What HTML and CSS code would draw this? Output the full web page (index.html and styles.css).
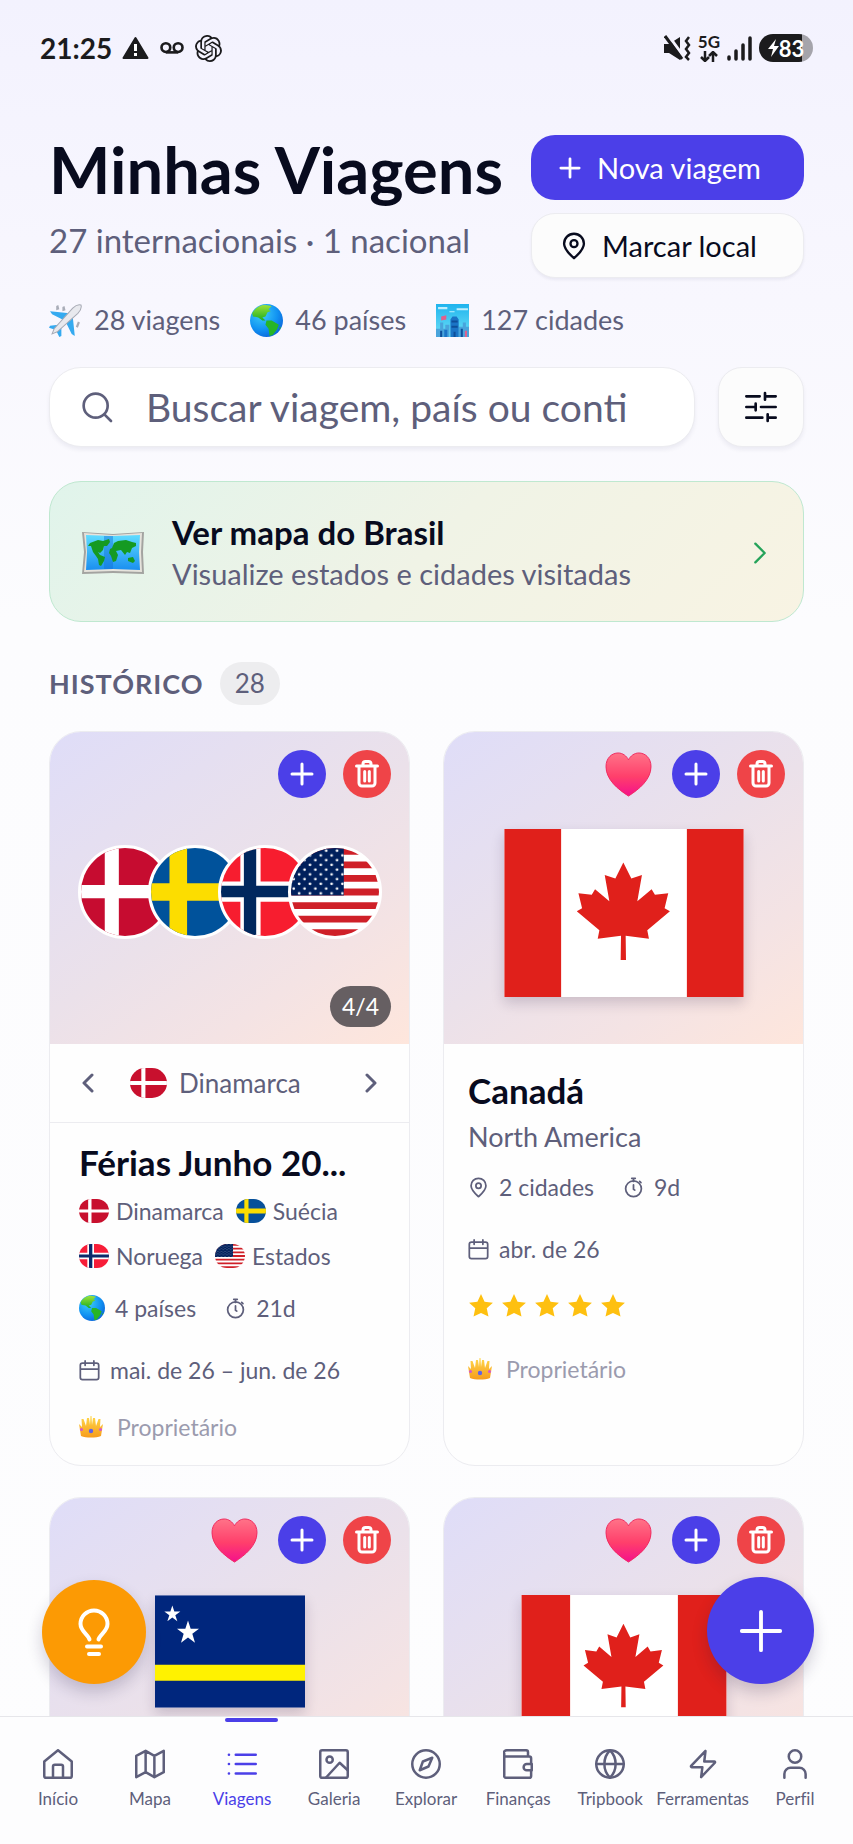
FILE: index.html
```html
<!DOCTYPE html>
<html lang="pt-BR">
<head>
  <meta charset="UTF-8">
  <meta name="viewport" content="width=device-width, initial-scale=1.0">
  <title>Minhas Viagens</title>
  <link rel="stylesheet" href="styles.css">
</head>
<body>

  <!-- Icon sprite -->
  <svg class="sprite" width="0" height="0" aria-hidden="true">
    <defs>
      <linearGradient id="g-heart" x1="0" y1="0" x2="0" y2="1">
        <stop offset="0" stop-color="#ff7388"/><stop offset=".55" stop-color="#ff3f6b"/><stop offset="1" stop-color="#f5108c"/>
      </linearGradient>
      <radialGradient id="g-sea" cx=".35" cy=".3" r=".8">
        <stop offset="0" stop-color="#3fd0f8"/><stop offset=".6" stop-color="#1192f2"/><stop offset="1" stop-color="#0a5fd8"/>
      </radialGradient>
      <linearGradient id="g-land" x1="0" y1="0" x2="0" y2="1">
        <stop offset="0" stop-color="#9be23a"/><stop offset="1" stop-color="#1fae1f"/>
      </linearGradient>
      <linearGradient id="g-map" x1="0" y1="0" x2="0" y2="1">
        <stop offset="0" stop-color="#5fdcff"/><stop offset="1" stop-color="#1a8ff0"/>
      </linearGradient>
      <linearGradient id="g-gold" x1="0" y1="0" x2="0" y2="1">
        <stop offset="0" stop-color="#ffd84a"/><stop offset="1" stop-color="#f79d1c"/>
      </linearGradient>
      <linearGradient id="g-sky" x1="0" y1="0" x2="0" y2="1">
        <stop offset="0" stop-color="#1fb4ee"/><stop offset="1" stop-color="#6fe0f6"/>
      </linearGradient>
      <pattern id="p-stars" width="16" height="14" patternUnits="userSpaceOnUse">
        <circle cx="4" cy="4" r="2" fill="#fff"/><circle cx="12" cy="11" r="2" fill="#fff"/>
      </pattern>
    </defs>

    <symbol id="plus" viewBox="0 0 24 24"><path d="M12 2v20M2 12h20"/></symbol>
    <symbol id="pin" viewBox="0 0 24 24"><path d="M20.500 10c0 5-5.500 9.800-8.500 12.500C9 19.800 3.500 15 3.500 10a8.500 8.500 0 0 1 17 0z"/><circle cx="12" cy="10" r="3"/></symbol>
    <symbol id="search" viewBox="0 0 24 24"><circle cx="11" cy="11" r="9"/><path d="m17.500 17.500 5 5"/></symbol>
    <symbol id="sliders" viewBox="0 0 24 24"><path d="M1 4h10M15 4h8M15 1.500v5M1 12h7M12 12h11M8 9.500v5M1 20h12M17 20h6M17 17.500v5"/></symbol>
    <symbol id="chev-right" viewBox="0 0 12 20"><path d="m2 2 8 8-8 8"/></symbol>
    <symbol id="chev-left" viewBox="0 0 12 20"><path d="m10 2-8 8 8 8"/></symbol>
    <symbol id="trash" viewBox="0 0 24 28"><path d="M1.500 6h21M4 6v17a3 3 0 0 0 3 3h10a3 3 0 0 0 3-3V6M8 6V4a2.500 2.500 0 0 1 2.500-2.500h3A2.500 2.500 0 0 1 16 4v2M9.700 11.500v9.500M14.300 11.500v9.500"/></symbol>
    <symbol id="timer" viewBox="0 0 24 24"><path d="M10 1.500h4M12 2v3M12 9v5l1.500 1M19 5l1.500 1.500"/><circle cx="12" cy="13.500" r="9"/></symbol>
    <symbol id="calendar" viewBox="0 0 24 24"><rect x="1.500" y="3.500" width="21" height="19" rx="2.500"/><path d="M7 1v5M17 1v5M2 10.500h20"/></symbol>
    <symbol id="star" viewBox="0 0 24 24"><path d="M12 1l3.300 7 7.700.9-5.700 5.200 1.600 7.700L12 18.500 5.100 21.800l1.600-7.700L1 8.900 8.700 8z"/></symbol>
    <symbol id="bulb" viewBox="0 0 32 48"><path d="M11.500 31.500c-1-5-9-8-9-15.500a13.500 13.500 0 0 1 27 0c0 7.500-8 10.500-9 15.500M9 38.500h14M11 46h10"/></symbol>

    <symbol id="home" viewBox="0 0 24 24"><path d="M1 10 12 1l11 9v11.500a1.500 1.500 0 0 1-1.500 1.500h-19A1.500 1.500 0 0 1 1 21.500z"/><path d="M8 23v-9a1.500 1.500 0 0 1 1.500-1.500h5A1.500 1.500 0 0 1 16 14v9"/></symbol>
    <symbol id="map" viewBox="0 0 24 24"><path d="M1 5.500 8.500 1.500l7 4 7.500-4v17l-7.500 4-7-4L1 22.500zM8.500 1.500v17M15.500 5.500v17"/></symbol>
    <symbol id="list" viewBox="0 0 24 24"><path d="M7 4.500h16M7 12h16M7 19.500h16M1.500 4.500h.1M1.500 12h.1M1.500 19.500h.1"/></symbol>
    <symbol id="image" viewBox="0 0 24 24"><rect x="1" y="1" width="22" height="22" rx="1.500"/><circle cx="8.500" cy="8.500" r="2.500"/><path d="m5.500 23 11-12 6.500 6"/></symbol>
    <symbol id="compass" viewBox="0 0 24 24"><circle cx="12" cy="12" r="11"/><path d="m17 7-3 7-7 3 2.500-7z"/></symbol>
    <symbol id="wallet" viewBox="0 0 24 24"><path d="M20 6V2.500A1.500 1.500 0 0 0 18.500 1H3a2 2 0 0 0 0 5h18a1.500 1.500 0 0 1 1.500 1.500V12M1 3.500V21A1.500 1.500 0 0 0 2.500 23H21a1.500 1.500 0 0 0 1.500-1.500V17"/><path d="M23 12h-4a2.500 2.500 0 0 0 0 5h4z"/></symbol>
    <symbol id="globe" viewBox="0 0 24 24"><circle cx="12" cy="12" r="11"/><path d="M1 12h22M12 1c3.500 3.500 4.500 7 4.500 11s-1 7.500-4.500 11c-3.500-3.500-4.500-7-4.500-11S8.500 4.500 12 1"/></symbol>
    <symbol id="zap" viewBox="0 0 24 24"><path d="M14 1.500 2.500 13.500a.6.600 0 0 0 .5 1h8.500L10.500 22.500 21.500 11a.6.600 0 0 0-.5-1h-8z"/></symbol>
    <symbol id="user" viewBox="0 0 24 24"><circle cx="12" cy="6" r="5"/><path d="M3.500 23v-3a5 5 0 0 1 5-5h7a5 5 0 0 1 5 5v3"/></symbol>

    <!-- Emoji-like pictures -->
    <symbol id="heart" viewBox="0 0 48 46"><path fill="url(#g-heart)" stroke="#f02a5e" d="M24 45C13 38 1 28 1 15 1 6 7 1 13.500 1 18 1 22 4 24 8c2-4 6-7 10.500-7C41 1 47 6 47 15c0 13-12 23-23 30z"/></symbol>
    <symbol id="earth" viewBox="0 0 32 32">
      <circle cx="16" cy="16" r="16" fill="url(#g-sea)"/>
      <path fill="url(#g-land)" d="M2 9C5 4 9 1 15 1l6 1-3 3 2 2-3 1-2 4-3 1 3 3-3 0-4-3-5-1z"/>
      <path fill="#27b527" d="M16 16l5 0 7 4-2 5-4 5-3 1-1-7-3-4zM28 23l2-1-1 3z"/>
    </symbol>
    <symbol id="plane" viewBox="0 0 32 32">
      <path fill="#35aaf0" d="M20 9 1 7l2 3 12 6zM23 12l2 19-3-2-6-12z"/>
      <path fill="#35aaf0" d="M9 20l-8 1-1 2 6 2zM12 23l0 8-2 1-3-6z"/>
      <path fill="#a9adb8" d="M7 2l2-1 1 4-3 1zM13 3l2-1 1 4-3 1zM28 17l2 1-2 5-2-1z"/>
      <path fill="#e8e9ee" stroke="#a8abb5" d="M31 1c-3-1-6 1-8 3L5 24l-2 5 5-2L28 9c2-2 4-5 3-8z"/>
    </symbol>
    <symbol id="city" viewBox="0 0 32 32">
      <path fill="url(#g-sky)" d="M0 0h32v32H0z"/>
      <path fill="#bdeefd" d="M2 3h9v2H2zM20 4h11v2H20zM13 7h5v1h-5z"/>
      <path fill="#49a4dc" d="M0 24h4v-6h3v6h2v-4h4v12H0zM22 22h4v-4h3v4h3v10H22z"/>
      <path fill="#1b74c6" d="M14 32V15l2-3h4l2 3v17zM8 25h3v7H8z"/>
      <path fill="#0e4f9a" d="M15 16h6v2h-6zM15 21h6v2h-6zM4 26h2v6H4zM24 24h2v8h-2zM17 27h2v5h-2z"/>
      <path fill="#e0608c" d="M5 12l5-1v4l-5 1zM28 26h2v6h-2z"/>
    </symbol>
    <symbol id="worldmap" viewBox="0 0 62 44">
      <path fill="#a3a3a0" d="M0 1l31 2L62 1l-1 20 1 22-31-1-31 1 2-22z"/>
      <path fill="#e6e3dc" d="M2 2l29 2 29-2-1 19 1 20-29-1-29 1 2-20z"/>
      <path fill="url(#g-map)" d="M4 4l27 1 27-1-1 17 1 18-27-1-27 1 1-18z"/>
      <path fill="#126fd6" opacity=".45" d="M22 5h9v33h-9z"/>
      <path fill="#159a22" d="M8 12l8-3 5 1 6-2 1 3-3 4-3 0-1 4-3 3-2-1 2 3 5 2-1 4-3 5-2-1-1-6-2-3-3-4-2-6-3 0zM30 17l2-5 4-2 8-1 6 2 4 1 0 3-4 2-2 5-3-1-2 3-4-5-5 1 2 4-2 6-3 1-2-6-2-3 1-4 4-2zM46 27l5-1 2 4-2 2-5-2z"/>
    </symbol>
    <symbol id="crown" viewBox="0 0 24 22">
      <path fill="url(#g-gold)" d="M2 20 0 8l3 3L2.500 3l2 0 2.500 7L8 2h2l1 7 .5-9h1l.5 9 1-7h2l1 8 2.500-7h2L21 11l3-3-2 12c-5 2-15 2-20 0z"/>
      <circle cx="12" cy="15" r="2.200" fill="#5f62e8"/><circle cx="2.500" cy="13.500" r="1.500" fill="#d657c9"/><circle cx="21.500" cy="13.500" r="1.500" fill="#d657c9"/>
    </symbol>

    <!-- Flags -->
    <symbol id="dk" viewBox="0 0 100 100" preserveAspectRatio="none"><path fill="#c60c30" d="M0 0h100v100H0z"/><path fill="#fff" d="M27 0h16v100H27z"/><path fill="#fff" d="M0 42h100v15H0z"/></symbol>
    <symbol id="se" viewBox="0 0 100 100" preserveAspectRatio="none"><path fill="#00529b" d="M0 0h100v100H0z"/><path fill="#fcdd00" d="M21 0h20v100H21z"/><path fill="#fcdd00" d="M0 40h100v20H0z"/></symbol>
    <symbol id="no" viewBox="0 0 100 100" preserveAspectRatio="none"><path fill="#f71d2f" d="M0 0h100v100H0z"/><path fill="#fff" d="M22 0h23v100H22z"/><path fill="#fff" d="M0 38h100v23H0z"/><path fill="#00285e" d="M26 0h14v100H26z"/><path fill="#00285e" d="M0 43h100v13H0z"/></symbol>
    <symbol id="us" viewBox="0 0 130 130" preserveAspectRatio="none"><path fill="#fff" d="M0 0h130v130H0z"/><path stroke="#cf2028" stroke-width="10" d="M0 5h130M0 25h130M0 45h130M0 65h130M0 85h130M0 105h130M0 125h130"/><path fill="#00205c" d="M0 0h78v70H0z"/><path fill="url(#p-stars)" d="M0 0h78v70H0z"/></symbol>
    <symbol id="dk-mini" viewBox="0 0 36 30" preserveAspectRatio="none"><path fill="#c8102e" d="M0 0h36v30H0z"/><path fill="#fff" d="M11 0h4v30h-4zM0 13h36v4H0z"/></symbol>
    <symbol id="se-mini" viewBox="0 0 36 30" preserveAspectRatio="none"><path fill="#07509a" d="M0 0h36v30H0z"/><path fill="#fcdd00" d="M10 0h5v30h-5zM0 12h36v6H0z"/></symbol>
    <symbol id="no-mini" viewBox="0 0 36 30" preserveAspectRatio="none"><path fill="#f71d38" d="M0 0h36v30H0z"/><path fill="#fff" d="M10 0h8v30h-8zM0 11h36v8H0z"/><path fill="#0a2a6b" d="M12 0h4v30h-4zM0 13h36v4H0z"/></symbol>
    <symbol id="ca" viewBox="0 0 720 505"><path fill="#fff" d="M0 0h720v505H0z"/><path fill="#e0201b" d="M0 0h171v505H0zM549 0h171v505H549z"/><path fill="#e0201b" d="M358 101l24 48 32-11-14 79 43-36 10 17 40-5-11 45 16 9-68 57 5 26-70-9 1 73h-16l1-73-70 9 5-26-68-57 16-9-11-45 40 5 10-17 43 36-14-79 32 11z"/></symbol>
    <symbol id="cw" viewBox="0 0 450 338"><path fill="#00267d" d="M0 0h450v338H0z"/><path fill="#fff200" d="M0 209h450v48H0z"/><path fill="#fff" d="M52 31l6 18h18L61 60l6 18-15-11-15 11 6-18-15-11h18zM99 76l8 25h25l-20 15 8 27-21-16-21 16 8-27-20-15h25z"/></symbol>
  </svg>

  <div class="app">
    <div class="status-bar">
      <div class="status-group">
        <span class="clock">21:25</span>
        <svg width="27" height="24" viewBox="0 0 27 24"><path fill="#1b1b1d" stroke="#1b1b1d" stroke-width="2" stroke-linejoin="round" d="M13.500 2 25.500 22h-24z"/><path fill="#fff" d="M12 8h3v7h-3zM12 17h3v3h-3z"/></svg>
        <svg width="26" height="14" viewBox="0 0 28 16"><g fill="none" stroke="#1b1b1d" stroke-width="3"><circle cx="7" cy="7.500" r="5"/><circle cx="21" cy="7.500" r="5"/><path d="M7 13h14"/></g></svg>
        <svg width="27" height="27" viewBox="0 0 24 24"><path fill="#1b1b1d" d="M22.282 9.821a5.985 5.985 0 0 0-.516-4.911 6.046 6.046 0 0 0-6.510-2.900A6.065 6.065 0 0 0 4.981 4.182a5.985 5.985 0 0 0-3.998 2.900 6.046 6.046 0 0 0 .743 7.097 5.980 5.980 0 0 0 .511 4.911 6.051 6.051 0 0 0 6.515 2.900A5.985 5.985 0 0 0 13.260 24a6.056 6.056 0 0 0 5.772-4.206 5.989 5.989 0 0 0 3.998-2.900 6.056 6.056 0 0 0-.748-7.073zm-9.022 12.608a4.476 4.476 0 0 1-2.876-1.041l.142-.080 4.778-2.758a.795.795 0 0 0 .393-.681v-6.737l2.020 1.169a.071.071 0 0 1 .038.052v5.583a4.504 4.504 0 0 1-4.495 4.494zm-9.661-4.125a4.471 4.471 0 0 1-.535-3.014l.142.085 4.783 2.758a.771.771 0 0 0 .781 0l5.843-3.369v2.332a.080.080 0 0 1-.033.062L9.740 19.950a4.499 4.499 0 0 1-6.141-1.646zM2.341 7.896a4.485 4.485 0 0 1 2.366-1.973V11.600a.766.766 0 0 0 .388.677l5.814 3.354-2.020 1.169a.076.076 0 0 1-.071 0l-4.830-2.787A4.504 4.504 0 0 1 2.341 7.872zm16.596 3.856L13.104 8.364 15.119 7.200a.076.076 0 0 1 .071 0l4.830 2.791a4.494 4.494 0 0 1-.677 8.104v-5.677a.790.790 0 0 0-.407-.667zm2.011-3.023l-.142-.085-4.774-2.782a.776.776 0 0 0-.785 0L9.409 9.230V6.897a.066.066 0 0 1 .028-.062l4.830-2.787a4.499 4.499 0 0 1 6.680 4.660zM8.307 12.863l-2.020-1.164a.080.080 0 0 1-.038-.057V6.074a4.499 4.499 0 0 1 7.376-3.454l-.142.081L8.704 5.459a.795.795 0 0 0-.393.681zm1.098-2.365l2.602-1.500 2.607 1.500v2.999l-2.597 1.500-2.607-1.500Z"/></svg>
      </div>
      <div class="status-group status-right">
        <svg width="27" height="26" viewBox="0 0 27 26"><path fill="#1b1b1d" d="M0 9h5l11-7v23L5 18H0z"/><path d="M4 0l16 22" stroke="#f4f3fe" stroke-width="3"/><path d="M1 1l17 23" stroke="#1b1b1d" stroke-width="3"/><path fill="none" stroke="#1b1b1d" stroke-width="2.500" d="M25 2l-3 4 3 4-3 4 3 4-3 4 3 3"/></svg>
        <span class="network">
          <span>5G</span>
          <svg width="18" height="11" viewBox="0 0 18 11"><path fill="none" stroke="#1b1b1d" stroke-width="2.500" d="M5 0v9M1 6l4 4 4-4M13 11V2M9 5l4-4 4 4"/></svg>
        </span>
        <svg width="25" height="25" viewBox="0 0 25 25"><path stroke="#1b1b1d" stroke-width="3.500" stroke-linecap="round" d="M2 21v2M9 15v8M16 9v14M23 2v21"/></svg>
        <span class="battery">
          <svg width="11" height="18" viewBox="0 0 11 18"><path fill="#fff" d="M8 0 0 10h5l-2 8 8-11H6z"/></svg>
          <span>83</span>
        </span>
      </div>
    </div>

    <main class="content">
      <header class="page-header">
        <div class="heading">
          <h1>Minhas Viagens</h1>
          <p class="subtitle">27 internacionais · 1 nacional</p>
        </div>
        <div class="header-actions">
          <button class="btn btn-primary" type="button"><svg class="icon btn-plus"><use href="#plus"/></svg>Nova viagem</button>
          <button class="btn btn-light" type="button"><svg class="icon btn-pin"><use href="#pin"/></svg>Marcar local</button>
        </div>
      </header>

      <ul class="totals">
        <li><svg><use href="#plane"/></svg>28 viagens</li>
        <li><svg><use href="#earth"/></svg>46 países</li>
        <li><svg><use href="#city"/></svg>127 cidades</li>
      </ul>

      <div class="search-row">
        <label class="search-box">
          <svg class="icon"><use href="#search"/></svg>
          <input type="text" placeholder="Buscar viagem, país ou conti" aria-label="Buscar viagem">
        </label>
        <button class="filter-btn" type="button" aria-label="Filtros"><svg class="icon"><use href="#sliders"/></svg></button>
      </div>

      <a class="map-banner" href="#mapa">
        <svg class="map-picture"><use href="#worldmap"/></svg>
        <span class="map-text">
          <strong>Ver mapa do Brasil</strong>
          <span>Visualize estados e cidades visitadas</span>
        </span>
        <svg class="icon map-chevron"><use href="#chev-right"/></svg>
      </a>

      <div class="section-title">
        <h2>HISTÓRICO</h2>
        <span class="count">28</span>
      </div>

      <div class="trips">
        <article class="trip trip-multi">
          <div class="cover">
            <div class="cover-actions">
              <button class="round round-add" type="button" aria-label="Adicionar"><svg class="icon"><use href="#plus"/></svg></button>
              <button class="round round-delete" type="button" aria-label="Excluir"><svg class="icon"><use href="#trash"/></svg></button>
            </div>
            <div class="flag-stack">
              <svg><use href="#dk"/></svg>
              <svg><use href="#se"/></svg>
              <svg><use href="#no"/></svg>
              <svg><use href="#us"/></svg>
            </div>
            <span class="counter">4/4</span>
          </div>
          <div class="country-nav">
            <button type="button" aria-label="Anterior"><svg class="icon"><use href="#chev-left"/></svg></button>
            <span class="country-current"><svg class="flag-pill"><use href="#dk-mini"/></svg>Dinamarca</span>
            <button type="button" aria-label="Próximo"><svg class="icon"><use href="#chev-right"/></svg></button>
          </div>
          <div class="trip-body">
            <h3>Férias Junho 20...</h3>
            <ul class="countries">
              <li><svg class="flag-pill"><use href="#dk-mini"/></svg>Dinamarca</li>
              <li><svg class="flag-pill"><use href="#se-mini"/></svg>Suécia</li>
              <li><svg class="flag-pill"><use href="#no-mini"/></svg>Noruega</li>
              <li><svg class="flag-pill"><use href="#us"/></svg>Estados</li>
            </ul>
            <ul class="meta">
              <li><svg class="meta-emoji"><use href="#earth"/></svg>4 países</li>
              <li><svg class="icon"><use href="#timer"/></svg>21d</li>
              <li><svg class="icon"><use href="#calendar"/></svg>mai. de 26 – jun. de 26</li>
            </ul>
            <p class="owner"><svg><use href="#crown"/></svg>Proprietário</p>
          </div>
        </article>

        <article class="trip">
          <div class="cover">
            <div class="cover-actions">
              <button class="fav" type="button" aria-label="Favorito"><svg><use href="#heart"/></svg></button>
              <button class="round round-add" type="button" aria-label="Adicionar"><svg class="icon"><use href="#plus"/></svg></button>
              <button class="round round-delete" type="button" aria-label="Excluir"><svg class="icon"><use href="#trash"/></svg></button>
            </div>
            <svg class="flag flag-large" viewBox="0 0 720 505"><use href="#ca"/></svg>
          </div>
          <div class="trip-body">
            <h3>Canadá</h3>
            <p class="region">North America</p>
            <ul class="meta">
              <li><svg class="icon"><use href="#pin"/></svg>2 cidades</li>
              <li><svg class="icon"><use href="#timer"/></svg>9d</li>
              <li><svg class="icon"><use href="#calendar"/></svg>abr. de 26</li>
            </ul>
            <div class="stars" role="img" aria-label="5 estrelas">
              <svg><use href="#star"/></svg>
              <svg><use href="#star"/></svg>
              <svg><use href="#star"/></svg>
              <svg><use href="#star"/></svg>
              <svg><use href="#star"/></svg>
            </div>
            <p class="owner"><svg><use href="#crown"/></svg>Proprietário</p>
          </div>
        </article>

        <article class="trip">
          <div class="cover">
            <div class="cover-actions">
              <button class="fav" type="button" aria-label="Favorito"><svg><use href="#heart"/></svg></button>
              <button class="round round-add" type="button" aria-label="Adicionar"><svg class="icon"><use href="#plus"/></svg></button>
              <button class="round round-delete" type="button" aria-label="Excluir"><svg class="icon"><use href="#trash"/></svg></button>
            </div>
            <svg class="flag flag-small" viewBox="0 0 450 338"><use href="#cw"/></svg>
          </div>
        </article>

        <article class="trip">
          <div class="cover">
            <div class="cover-actions">
              <button class="fav" type="button" aria-label="Favorito"><svg><use href="#heart"/></svg></button>
              <button class="round round-add" type="button" aria-label="Adicionar"><svg class="icon"><use href="#plus"/></svg></button>
              <button class="round round-delete" type="button" aria-label="Excluir"><svg class="icon"><use href="#trash"/></svg></button>
            </div>
            <svg class="flag flag-medium" viewBox="0 0 720 505"><use href="#ca"/></svg>
          </div>
        </article>
      </div>
    </main>

    <button class="fab fab-tips" type="button" aria-label="Dicas"><svg class="icon"><use href="#bulb"/></svg></button>
    <button class="fab fab-add" type="button" aria-label="Nova viagem"><svg class="icon"><use href="#plus"/></svg></button>

    <nav class="tab-bar">
      <a href="#inicio"><svg class="icon"><use href="#home"/></svg>Início</a>
      <a href="#mapa"><svg class="icon"><use href="#map"/></svg>Mapa</a>
      <a href="#viagens" class="active"><svg class="icon"><use href="#list"/></svg>Viagens</a>
      <a href="#galeria"><svg class="icon"><use href="#image"/></svg>Galeria</a>
      <a href="#explorar"><svg class="icon"><use href="#compass"/></svg>Explorar</a>
      <a href="#financas"><svg class="icon"><use href="#wallet"/></svg>Finanças</a>
      <a href="#tripbook"><svg class="icon"><use href="#globe"/></svg>Tripbook</a>
      <a href="#ferramentas"><svg class="icon"><use href="#zap"/></svg>Ferramentas</a>
      <a href="#perfil"><svg class="icon"><use href="#user"/></svg>Perfil</a>
    </nav>
  </div>

</body>
</html>
```
FILE: styles.css
```css
:root {
  --ink: #080b1e;
  --muted: #5e5f7b;
  --faint: #9b9bae;
  --primary: #4b3fe8;
  --danger: #ef4448;
  --line: #ececf0;
}
* {
  box-sizing: border-box;
}
body {
  margin: 0;
  font-family: Lato, "Open Sans", sans-serif;
  font-variant-ligatures: none;
  color: var(--muted);
}
h1, h2, h3, p, ul {
  margin: 0;
  padding: 0;
}
ul {
  list-style: none;
}
button {
  font-family: inherit;
  border: none;
  padding: 0;
  background: none;
  cursor: pointer;
}
a {
  color: inherit;
  text-decoration: none;
}
svg {
  flex: none;
  display: block;
}
.sprite {
  position: absolute;
}
.icon {
  fill: none;
  stroke: currentColor;
  stroke-width: 2;
  stroke-linecap: round;
  stroke-linejoin: round;
}
.app {
  position: relative;
  display: flex;
  flex-direction: column;
  height: 100vh;
  overflow: hidden;
  background: linear-gradient(#f3f2fe, #f8f7fe 300px, #fcfcfe 620px, #fdfdfe);
}

/* Status bar */
.status-bar {
  flex: none;
  display: flex;
  justify-content: space-between;
  align-items: center;
  height: 96px;
  padding: 0 40px;
  color: #1b1b1d;
}
.status-group {
  display: flex;
  align-items: center;
  gap: 10px;
}
.status-right {
  gap: 7px;
}
.clock {
  font-size: 28px;
  font-weight: 700;
}
.network {
  display: flex;
  flex-direction: column;
  align-items: center;
  gap: 2px;
  font-size: 17px;
  font-weight: 700;
  line-height: 14px;
}
.battery {
  display: flex;
  align-items: center;
  justify-content: center;
  width: 54px;
  height: 28px;
  border-radius: 14px;
  background: linear-gradient(90deg, #1b1b1d 80%, #a5a4ab 80%);
  color: #fff;
  font-size: 22px;
  font-weight: 700;
}

/* Header */
.content {
  flex: 1;
  min-height: 0;
  padding: 39px 49px 0;
  overflow-y: auto;
  scrollbar-width: none;
}
.page-header {
  display: flex;
  justify-content: space-between;
  gap: 16px;
}
.heading {
  white-space: nowrap;
}
h1 {
  font-size: 65px;
  font-weight: 700;
  line-height: 68px;
  color: var(--ink);
}
.subtitle {
  margin-top: 17px;
  font-size: 33px;
  line-height: 40px;
}
.header-actions {
  display: flex;
  flex-direction: column;
  gap: 13px;
  flex: 0 0 273px;
}
.btn {
  display: flex;
  align-items: center;
  height: 65px;
  padding: 0 28px;
  border-radius: 24px;
  font-size: 29px;
}
.btn-primary {
  gap: 16px;
  background: var(--primary);
  color: #fff;
}
.btn-light {
  gap: 14px;
  border: 1px solid var(--line);
  background: #fcfcfc;
  color: var(--ink);
  box-shadow: 0 2px 3px rgba(20, 20, 60, 0.06);
}
.btn-plus {
  width: 22px;
  height: 22px;
  stroke-width: 3;
}
.btn-pin {
  width: 28px;
  height: 28px;
}
.totals {
  display: flex;
  gap: 30px;
  margin-top: 24px;
  font-size: 27px;
  line-height: 36px;
}
.totals li {
  display: flex;
  align-items: center;
  gap: 12px;
}
.totals svg {
  width: 33px;
  height: 33px;
}

/* Search */
.search-row {
  display: flex;
  gap: 23px;
  margin-top: 29px;
}
.search-box {
  flex: 1;
  display: flex;
  align-items: center;
  gap: 33px;
  min-width: 0;
  height: 80px;
  padding: 0 31px;
  border: 1px solid var(--line);
  border-radius: 32px;
  background: #fff;
  box-shadow: 0 3px 4px rgba(20, 20, 60, 0.06);
}
.search-box .icon {
  width: 32px;
  height: 32px;
}
.search-box input {
  flex: 1;
  min-width: 0;
  padding: 0;
  border: none;
  outline: none;
  background: transparent;
  font-family: inherit;
  font-size: 39px;
  color: var(--ink);
}
.search-box input::placeholder {
  color: var(--muted);
  opacity: 1;
}
.filter-btn {
  display: flex;
  align-items: center;
  justify-content: center;
  width: 86px;
  border: 1px solid var(--line);
  border-radius: 24px;
  background: #fcfcfc;
  color: var(--ink);
  box-shadow: 0 3px 4px rgba(20, 20, 60, 0.06);
}
.filter-btn .icon {
  width: 32px;
  height: 32px;
}

/* Map banner */
.map-banner {
  display: flex;
  align-items: center;
  gap: 28px;
  height: 141px;
  margin-top: 34px;
  padding: 2px 36px 0 32px;
  border: 1px solid #bfe8d0;
  border-radius: 32px;
  background: linear-gradient(135deg, #e0f4eb, #f0f3e6 50%, #f8f3e3);
}
.map-picture {
  width: 62px;
  height: 44px;
}
.map-text {
  flex: 1;
  display: flex;
  flex-direction: column;
  gap: 4px;
  font-size: 29px;
  line-height: 38px;
}
.map-text strong {
  font-size: 33px;
  font-weight: 700;
  color: var(--ink);
}
.map-chevron {
  width: 14px;
  height: 24px;
  color: #25a35a;
}

/* Section title */
.section-title {
  display: flex;
  align-items: center;
  gap: 16px;
  margin: 40px 0 26px;
}
.section-title h2 {
  font-size: 27px;
  font-weight: 700;
  letter-spacing: 1px;
}
.count {
  padding: 0 15px;
  border-radius: 22px;
  background: #ededef;
  font-size: 26px;
  line-height: 43px;
}

/* Trip cards */
.trips {
  display: grid;
  grid-template-columns: 1fr 1fr;
  gap: 31px 33px;
}
.trip {
  border: 1px solid var(--line);
  border-radius: 32px;
  background: #fefefe;
  overflow: hidden;
}
.cover {
  position: relative;
  display: flex;
  justify-content: center;
  align-items: flex-start;
  height: 312px;
  padding-top: 97px;
  background: linear-gradient(145deg, #dfddf8, #ebe1ea 50%, #f4e3e4 75%, #fee6dc);
}
.trip-multi .cover {
  align-items: center;
  padding-top: 8px;
}
.cover-actions {
  position: absolute;
  top: 18px;
  right: 18px;
  display: flex;
  gap: 17px;
}
.round {
  display: flex;
  align-items: center;
  justify-content: center;
  width: 48px;
  height: 48px;
  border-radius: 50%;
  color: #fff;
}
.round-add {
  background: var(--primary);
}
.round-add .icon {
  width: 24px;
  height: 24px;
  stroke-width: 3;
}
.round-delete {
  background: var(--danger);
}
.round-delete .icon {
  width: 24px;
  height: 28px;
  stroke-width: 3;
}
.fav {
  padding-right: 3px;
}
.fav svg {
  width: 47px;
  height: 45px;
}
.flag {
  box-shadow: 0 6px 12px rgba(40, 20, 60, 0.18);
}
.flag-large {
  width: 240px;
  height: 168px;
}
.flag-medium {
  width: 206px;
  height: 144px;
}
.flag-small {
  width: 150px;
  height: 113px;
}
.flag-stack {
  display: flex;
}
.flag-stack svg {
  width: 94px;
  height: 94px;
  border: 3px solid #fff;
  border-radius: 50%;
  background: #fff;
}
.flag-stack svg + svg {
  margin-left: -24px;
}
.counter {
  position: absolute;
  right: 18px;
  bottom: 17px;
  padding: 0 12px;
  border-radius: 21px;
  background: #665f62;
  color: #fff;
  font-size: 23px;
  line-height: 41px;
}
.country-nav {
  display: flex;
  align-items: center;
  gap: 36px;
  height: 79px;
  padding: 0 32px;
  border-bottom: 1px solid var(--line);
}
.country-nav button {
  color: var(--muted);
}
.country-nav button .icon {
  width: 12px;
  height: 20px;
  stroke-width: 3;
}
.country-current {
  flex: 1;
  display: flex;
  align-items: center;
  gap: 12px;
  font-size: 26px;
}
.flag-pill {
  width: 30px;
  height: 24px;
  border-radius: 12px;
}
.country-current .flag-pill {
  width: 37px;
  height: 30px;
  border-radius: 15px;
}
.trip-body {
  padding: 24px;
  font-size: 23px;
  line-height: 28px;
}
.trip-multi .trip-body {
  padding: 17px 29px 24px;
}
.trip-body h3 {
  font-size: 35px;
  font-weight: 700;
  line-height: 44px;
  color: var(--ink);
  white-space: nowrap;
}
.region {
  margin-top: 7px;
  font-size: 27px;
  line-height: 36px;
}
.countries {
  display: flex;
  flex-wrap: wrap;
  gap: 17px 12px;
  margin-top: 13px;
}
.countries li {
  display: flex;
  align-items: center;
  gap: 7px;
}
.meta {
  display: flex;
  flex-wrap: wrap;
  gap: 34px 29px;
  margin-top: 18px;
}
.countries + .meta {
  margin-top: 24px;
}
.meta li {
  display: flex;
  align-items: center;
  gap: 10px;
}
.meta .icon {
  width: 21px;
  height: 21px;
}
.meta .meta-emoji {
  width: 26px;
  height: 26px;
}
.stars {
  display: flex;
  gap: 7px;
  margin-top: 30px;
}
.stars svg {
  width: 26px;
  height: 26px;
  fill: #fec010;
}
.owner {
  display: flex;
  align-items: center;
  gap: 14px;
  margin-top: 29px;
  color: var(--faint);
}
.stars + .owner {
  margin-top: 36px;
}
.owner svg {
  width: 24px;
  height: 22px;
}

/* Floating buttons */
.fab {
  position: absolute;
  bottom: 160px;
  display: flex;
  align-items: center;
  justify-content: center;
  border-radius: 50%;
  color: #fff;
  box-shadow: 0 8px 16px rgba(30, 20, 60, 0.2);
}
.fab-tips {
  left: 42px;
  width: 104px;
  height: 104px;
  background: #fc9a04;
}
.fab-tips .icon {
  width: 32px;
  height: 48px;
  stroke-width: 4;
}
.fab-add {
  right: 39px;
  width: 107px;
  height: 107px;
  background: var(--primary);
}
.fab-add .icon {
  width: 46px;
  height: 46px;
}

/* Tab bar */
.tab-bar {
  flex: none;
  display: grid;
  grid-template-columns: repeat(9, 1fr);
  height: 128px;
  padding: 0 12px;
  border-top: 1px solid #e6e6ea;
  background: #fdfdfe;
}
.tab-bar a {
  position: relative;
  display: flex;
  flex-direction: column;
  align-items: center;
  gap: 7px;
  padding-top: 32px;
  font-size: 17px;
  line-height: 26px;
}
.tab-bar .icon {
  width: 30px;
  height: 30px;
  overflow: visible;
}
.tab-bar .active {
  color: var(--primary);
}
.tab-bar .active::before {
  content: "";
  position: absolute;
  top: 1px;
  right: 10px;
  width: 53px;
  height: 4px;
  border-radius: 2px;
  background: var(--primary);
}
```
